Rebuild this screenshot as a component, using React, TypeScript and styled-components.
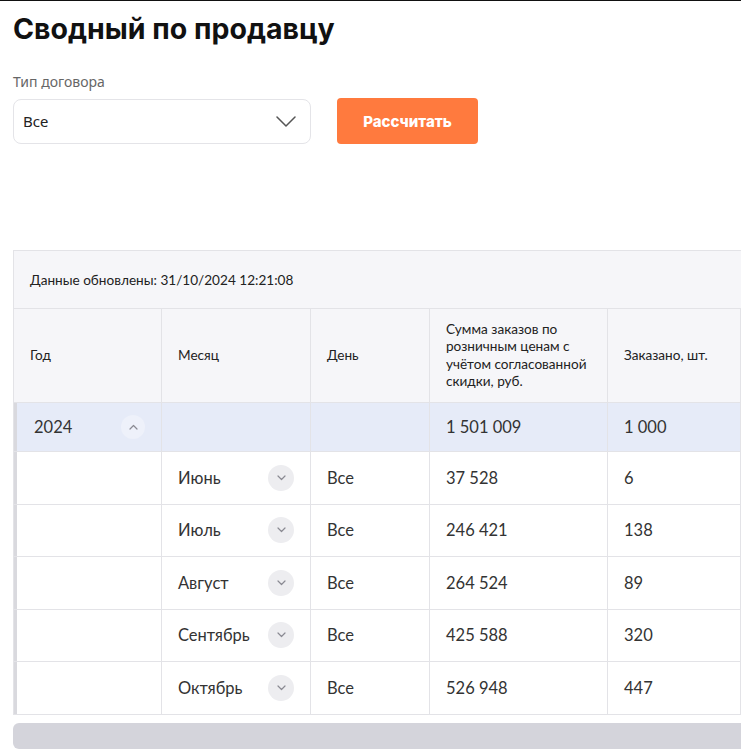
import styled, { createGlobalStyle } from 'styled-components';

const GlobalStyle = createGlobalStyle`
  html, body {
    margin: 0;
    padding: 0;
    background: #ffffff;
    overflow: hidden;
  }
  body {
    font-family: Lato, "Noto Sans", sans-serif;
    color: #222;
  }
`;

const Page = styled.div`
  border-top: 1px solid #111;
  padding: 0 0 0 13px;
  height: 753px;
  overflow: hidden;
`;

const Title = styled.h1`
  margin: 10px 0 0;
  font-family: Inter, "Noto Sans", sans-serif;
  font-size: 28.5px;
  line-height: 36px;
  font-weight: 700;
  color: #111;
`;

const FieldLabel = styled.div`
  margin-top: 26px;
  font-family: "Noto Sans", sans-serif;
  font-size: 14px;
  line-height: 18px;
  color: #666;
`;

const Controls = styled.div`
  display: flex;
  align-items: center;
  gap: 26px;
  margin-top: 7px;
`;

const Select = styled.div`
  box-sizing: border-box;
  width: 298px;
  height: 45px;
  border: 1px solid #e4e4e8;
  border-radius: 8px;
  display: flex;
  align-items: center;
  justify-content: space-between;
  padding: 0 14px 0 9px;
  font-family: "Noto Sans", sans-serif;
  font-size: 15px;
  color: #222;
`;

const Button = styled.button`
  box-sizing: border-box;
  width: 141px;
  height: 46px;
  border: none;
  border-radius: 4px;
  background: #ff7a3e;
  color: #fff;
  font-family: Inter, sans-serif;
  font-size: 15px;
  font-weight: 800;
  cursor: pointer;
`;

const TableCard = styled.div`
  margin-top: 106px;
  width: 900px;
`;

const InfoBar = styled.div`
  box-sizing: border-box;
  height: 58px;
  display: flex;
  align-items: center;
  padding-left: 16px;
  background: #f6f6f9;
  border: 1px solid #e3e3e7;
  border-bottom: none;
  font-size: 13.6px;
  color: #222;
`;

const Table = styled.table`
  border-collapse: collapse;
  table-layout: fixed;
  width: 900px;
`;

const Th = styled.th`
  box-sizing: border-box;
  height: 94px;
  padding: 0 16px;
  text-align: left;
  vertical-align: middle;
  font-weight: 400;
  font-size: 13.6px;
  line-height: 17.5px;
  color: #222;
  background: #f6f6f9;
  border: 1px solid #e3e3e7;
`;

const Tr = styled.tr<{ $group?: boolean }>`
  height: ${p => (p.$group ? '49px' : '52.5px')};
  background: ${p => (p.$group ? '#e6ebf8' : '#fff')};
`;

const Td = styled.td`
  box-sizing: border-box;
  padding: 0 16px;
  font-size: 16.5px;
  color: #333;
  border: 1px solid #e3e3e7;
  vertical-align: middle;
  &:first-child {
    box-shadow: inset 3px 0 0 #d9d9de;
    padding-left: 20px;
  }
`;

const CellFlex = styled.div`
  display: flex;
  align-items: center;
  justify-content: space-between;
`;

const Toggle = styled.span<{ $light?: boolean }>`
  width: ${p => (p.$light ? '24px' : '26px')};
  height: ${p => (p.$light ? '24px' : '26px')};
  border-radius: 50%;
  background: ${p => (p.$light ? '#eef1fa' : '#ededf0')};
  display: inline-flex;
  align-items: center;
  justify-content: center;
  flex-shrink: 0;
`;

const Scrollbar = styled.div`
  margin-top: 8px;
  height: 26px;
  width: 900px;
  border-radius: 6px;
  background: #d4d4db;
`;

const Chevron = ({ up }: { up?: boolean }) => (
  <svg width="9" height="6" viewBox="0 0 9 6" fill="none">
    <path
      d={up ? 'M1 5L4.5 1.5L8 5' : 'M1 1L4.5 4.5L8 1'}
      stroke="#8a8a92"
      strokeWidth="1.2"
      strokeLinecap="round"
      strokeLinejoin="round"
    />
  </svg>
);

const months = [
  { name: 'Июнь', sum: '37 528', qty: '6' },
  { name: 'Июль', sum: '246 421', qty: '138' },
  { name: 'Август', sum: '264 524', qty: '89' },
  { name: 'Сентябрь', sum: '425 588', qty: '320' },
  { name: 'Октябрь', sum: '526 948', qty: '447' },
];

export default function App() {
  return (
    <>
      <GlobalStyle />
      <Page>
        <Title>Сводный по продавцу</Title>
        <FieldLabel>Тип договора</FieldLabel>
        <Controls>
          <Select>
            <span>Все</span>
            <svg width="20" height="11" viewBox="0 0 20 11" fill="none">
              <path d="M1 1L10 10L19 1" stroke="#555" strokeWidth="1.5" strokeLinecap="round" strokeLinejoin="round" />
            </svg>
          </Select>
          <Button>Рассчитать</Button>
        </Controls>

        <TableCard>
          <InfoBar>Данные обновлены: 31/10/2024 12:21:08</InfoBar>
          <Table>
            <colgroup>
              <col style={{ width: 148 }} />
              <col style={{ width: 149 }} />
              <col style={{ width: 119 }} />
              <col style={{ width: 178 }} />
              <col style={{ width: 133 }} />
              <col />
            </colgroup>
            <thead>
              <tr>
                <Th>Год</Th>
                <Th>Месяц</Th>
                <Th>День</Th>
                <Th>
                  Сумма заказов по
                  <br />
                  розничным ценам с
                  <br />
                  учётом согласованной
                  <br />
                  скидки, руб.
                </Th>
                <Th>Заказано, шт.</Th>
                <Th />
              </tr>
            </thead>
            <tbody>
              <Tr $group>
                <Td>
                  <CellFlex>
                    <span>2024</span>
                    <Toggle $light>
                      <Chevron up />
                    </Toggle>
                  </CellFlex>
                </Td>
                <Td />
                <Td />
                <Td>1 501 009</Td>
                <Td>1 000</Td>
                <Td />
              </Tr>
              {months.map(m => (
                <Tr key={m.name}>
                  <Td />
                  <Td>
                    <CellFlex>
                      <span>{m.name}</span>
                      <Toggle>
                        <Chevron />
                      </Toggle>
                    </CellFlex>
                  </Td>
                  <Td>Все</Td>
                  <Td>{m.sum}</Td>
                  <Td>{m.qty}</Td>
                  <Td />
                </Tr>
              ))}
            </tbody>
          </Table>
          <Scrollbar />
        </TableCard>
      </Page>
    </>
  );
}
